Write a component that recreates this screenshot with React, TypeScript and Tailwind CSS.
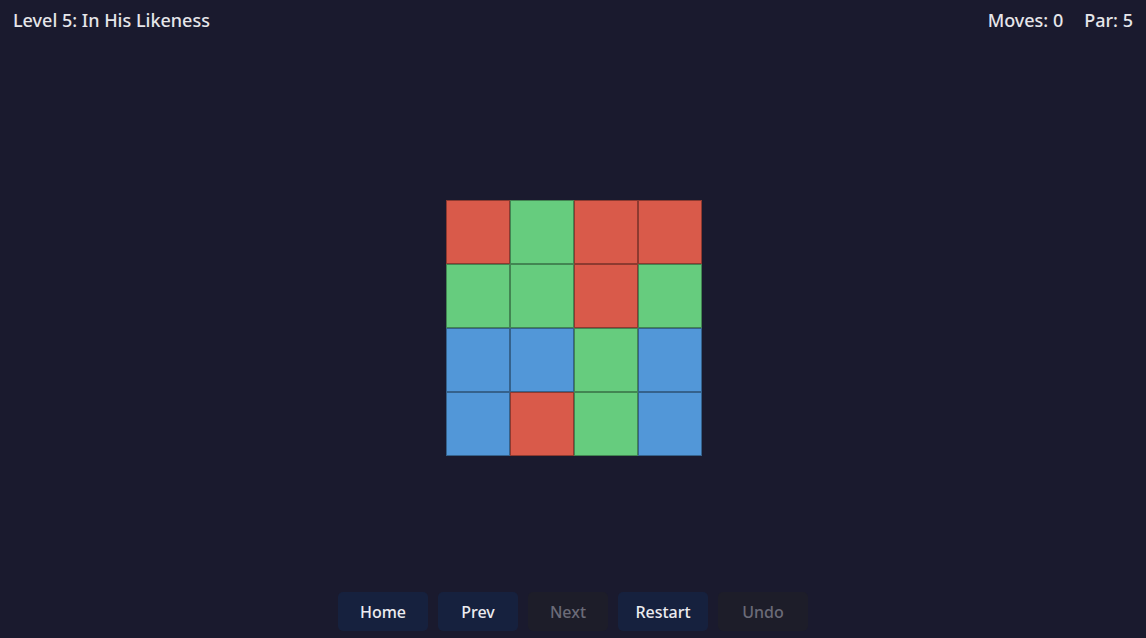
const R = 'bg-[#d95a4a]'
const G = 'bg-[#66cc7e]'
const B = 'bg-[#5297d8]'

const board = [
  [R, G, R, R],
  [G, G, R, G],
  [B, B, G, B],
  [B, R, G, B],
]

const buttons = [
  { label: 'Home', enabled: true, w: 'w-[90px]' },
  { label: 'Prev', enabled: true, w: 'w-[80px]' },
  { label: 'Next', enabled: false, w: 'w-[80px]' },
  { label: 'Restart', enabled: true, w: 'w-[90px]' },
  { label: 'Undo', enabled: false, w: 'w-[90px]' },
]

export default function App() {
  return (
    <div className="h-[638px] w-full bg-[#1a1a2e] flex flex-col overflow-hidden font-['Noto_Sans',sans-serif] text-[#e6e6ea]">
      {/* Header */}
      <header className="flex items-center justify-between px-[13px] h-[40px]">
        <h1 className="text-[18px] font-medium">Level 5: In His Likeness</h1>
        <div className="flex items-center gap-[21px] text-[18px] font-medium">
          <span>Moves: 0</span>
          <span>Par: 5</span>
        </div>
      </header>

      {/* Board */}
      <main className="flex-1 flex items-center justify-center pt-[23px] pl-[2px]">
        <div className="grid grid-cols-4">
          {board.flat().map((c, i) => (
            <div key={i} className={`w-[64px] h-[64px] border border-black/35 ${c}`} />
          ))}
        </div>
      </main>

      {/* Controls */}
      <footer className="flex justify-center gap-[10px] pb-[7px]">
        {buttons.map((b) => (
          <button
            key={b.label}
            disabled={!b.enabled}
            className={`${b.w} h-[39px] rounded-[5px] text-[16px] font-medium ${
              b.enabled ? 'bg-[#16213e] text-[#ececf0]' : 'bg-[#1d1d29] text-[#6b6b78]'
            }`}
          >
            {b.label}
          </button>
        ))}
      </footer>
    </div>
  )
}
